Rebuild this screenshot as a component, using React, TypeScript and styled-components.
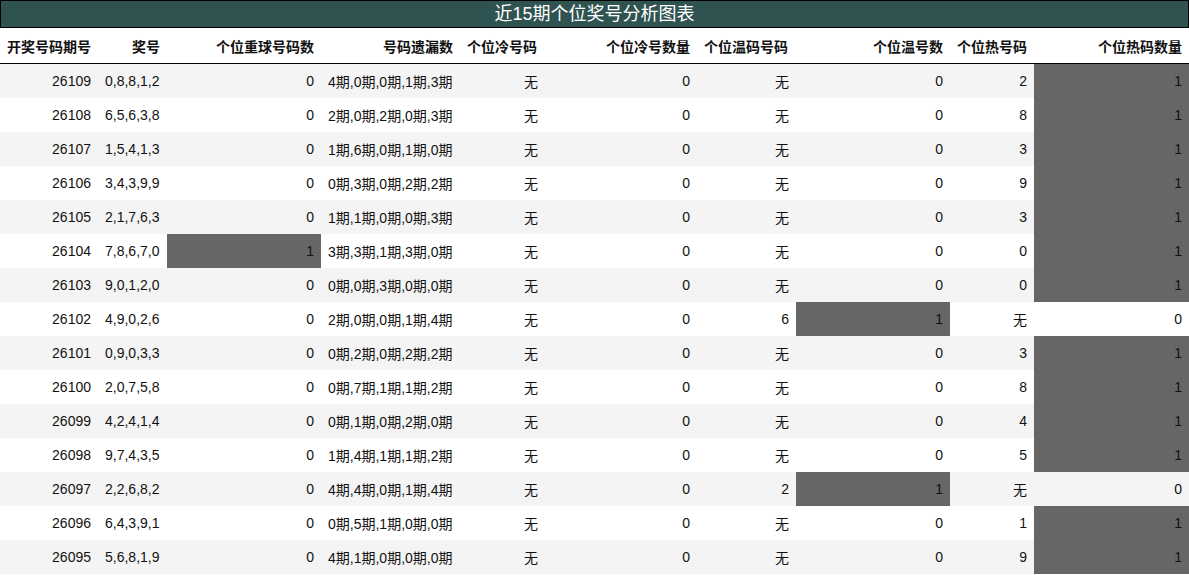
import React from "react";
import styled, { createGlobalStyle } from "styled-components";

const Global = createGlobalStyle`
  body {
    margin: 0;
    font-family: "Liberation Sans", "Noto Sans CJK SC", sans-serif;
    font-size: 14px;
    color: #111;
    background: #fff;
  }
`;

const cols = [98, 69, 154, 139, 85, 152, 99, 154, 84, 155];
const headAlign = ["left", "right", "right", "right", "left", "right", "left", "right", "left", "right"];
const cellAlign = ["right", "left", "right", "left", "right", "right", "right", "right", "right", "right"];
const headers = ["开奖号码期号", "奖号", "个位重球号码数", "号码遗漏数", "个位冷号码", "个位冷号数量", "个位温码号码", "个位温号数", "个位热号码", "个位热码数量"];

const rows: string[][] = [
  ["26109", "0,8,8,1,2", "0", "4期,0期,0期,1期,3期", "无", "0", "无", "0", "2", "1"],
  ["26108", "6,5,6,3,8", "0", "2期,0期,2期,0期,3期", "无", "0", "无", "0", "8", "1"],
  ["26107", "1,5,4,1,3", "0", "1期,6期,0期,1期,0期", "无", "0", "无", "0", "3", "1"],
  ["26106", "3,4,3,9,9", "0", "0期,3期,0期,2期,2期", "无", "0", "无", "0", "9", "1"],
  ["26105", "2,1,7,6,3", "0", "1期,1期,0期,0期,3期", "无", "0", "无", "0", "3", "1"],
  ["26104", "7,8,6,7,0", "1", "3期,3期,1期,3期,0期", "无", "0", "无", "0", "0", "1"],
  ["26103", "9,0,1,2,0", "0", "0期,0期,3期,0期,0期", "无", "0", "无", "0", "0", "1"],
  ["26102", "4,9,0,2,6", "0", "2期,0期,0期,1期,4期", "无", "0", "6", "1", "无", "0"],
  ["26101", "0,9,0,3,3", "0", "0期,2期,0期,2期,2期", "无", "0", "无", "0", "3", "1"],
  ["26100", "2,0,7,5,8", "0", "0期,7期,1期,1期,2期", "无", "0", "无", "0", "8", "1"],
  ["26099", "4,2,4,1,4", "0", "0期,1期,0期,2期,0期", "无", "0", "无", "0", "4", "1"],
  ["26098", "9,7,4,3,5", "0", "1期,4期,1期,1期,2期", "无", "0", "无", "0", "5", "1"],
  ["26097", "2,2,6,8,2", "0", "4期,4期,0期,1期,4期", "无", "0", "2", "1", "无", "0"],
  ["26096", "6,4,3,9,1", "0", "0期,5期,1期,0期,0期", "无", "0", "无", "0", "1", "1"],
  ["26095", "5,6,8,1,9", "0", "4期,1期,0期,0期,0期", "无", "0", "无", "0", "9", "1"],
];

const Title = styled.div`
  height: 26px;
  background: #2f5350;
  border: 1px solid #000;
  color: #fff;
  font-size: 18px;
  line-height: 26px;
  text-align: center;
`;

const Grid = styled.div`
  display: grid;
  grid-template-columns: ${cols.map((c) => c + "px").join(" ")};
`;

const Head = styled.div<{ $align: string }>`
  height: 35px;
  border-bottom: 1px solid #000;
  padding: 0 7px;
  display: flex;
  align-items: center;
  justify-content: ${(p) => (p.$align === "left" ? "flex-start" : "flex-end")};
  font-weight: bold;
  white-space: nowrap;
`;

const Cell = styled.div<{ $align: string; $bg: string }>`
  height: 34px;
  padding: 0 7px;
  display: flex;
  align-items: center;
  justify-content: ${(p) => (p.$align === "left" ? "flex-start" : "flex-end")};
  background: ${(p) => p.$bg};
  white-space: nowrap;
`;

const hot = [2, 7, 9];

export default function App() {
  return (
    <>
      <Global />
      <Title>近15期个位奖号分析图表</Title>
      <Grid>
        {headers.map((h, i) => (
          <Head key={h} $align={headAlign[i]}>{h}</Head>
        ))}
        {rows.map((r, ri) =>
          r.map((v, ci) => {
            const mark = hot.includes(ci) && v === "1";
            const bg = mark ? "#666" : ri % 2 === 0 ? "#f4f4f4" : "#fff";
            return (
              <Cell key={ri + "-" + ci} $align={cellAlign[ci]} $bg={bg}>
                {v}
              </Cell>
            );
          })
        )}
      </Grid>
    </>
  );
}
